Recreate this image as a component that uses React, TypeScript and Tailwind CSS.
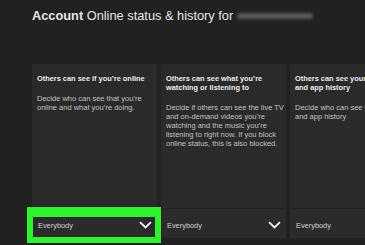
const cards = [
  {
    title: ["Others can see if you\u2019re online"],
    desc: ["Decide who can see that you\u2019re", "online and what you\u2019re doing."],
  },
  {
    title: ["Others can see what you\u2019re", "watching or listening to"],
    desc: [
      "Decide if others can see the live TV",
      "and on-demand videos you\u2019re",
      "watching and the music you\u2019re",
      "listening to right now. If you block",
      "online status, this is also blocked.",
    ],
  },
  {
    title: ["Others can see your game", "and app history"],
    desc: ["Decide who can see your game", "and app history"],
  },
]

function Chevron() {
  return (
    <svg width="13" height="8" viewBox="0 0 13 8" fill="none">
      <path d="M1 1.2 L6.5 6.5 L12 1.2" stroke="#f2f2f2" strokeWidth="1.8" />
    </svg>
  )
}

export default function App() {
  return (
    <div
      className="relative w-[365px] h-[245px] overflow-hidden bg-[#212121] text-[#e6e6e6]"
      style={{ fontFamily: '"Liberation Sans", Arial, sans-serif' }}
    >
      <div className="pl-[32px] pt-[8px] h-[64px] text-[12.8px] leading-[15px] whitespace-nowrap flex">
        <span className="font-bold mr-[3.5px]">Account</span>
        <span>Online status &amp; history for</span>
        <span className="ml-[4px] mt-[5px] w-[76px] h-[6px] rounded-sm bg-[#5a5a5a] blur-[1.5px]" />
      </div>

      <div className="flex gap-[4px] pl-[32px]">
        {cards.map((c, i) => (
          <div key={i} className="w-[125px] shrink-0 flex flex-col gap-[1px]">
            <div className="h-[144px] bg-[#2a2a2a] pl-[5px] pt-[10px] whitespace-nowrap">
              <div className="text-[7.4px] leading-[9px] font-bold text-[#ececec]">
                {c.title.map((t, j) => <div key={j}>{t}</div>)}
              </div>
              <div className="mt-[11px] text-[7.5px] leading-[9px] text-[#c2c2c2]">
                {c.desc.map((t, j) => <div key={j}>{t}</div>)}
              </div>
            </div>
            <div className="h-[29px] bg-[#2b2b2b] flex items-center justify-between pl-[6px] pr-[5px]">
              <span className="text-[7.4px] text-[#d2d2d2] mt-[5px]">Everybody</span>
              <div className="mt-[3px]"><Chevron /></div>
            </div>
          </div>
        ))}
      </div>

      <div className="absolute left-[27px] top-[207px] w-[134px] h-[36px] border-[#2ef22e] border-x-[6px] border-b-[6px] border-t-[10px]" />
    </div>
  )
}
